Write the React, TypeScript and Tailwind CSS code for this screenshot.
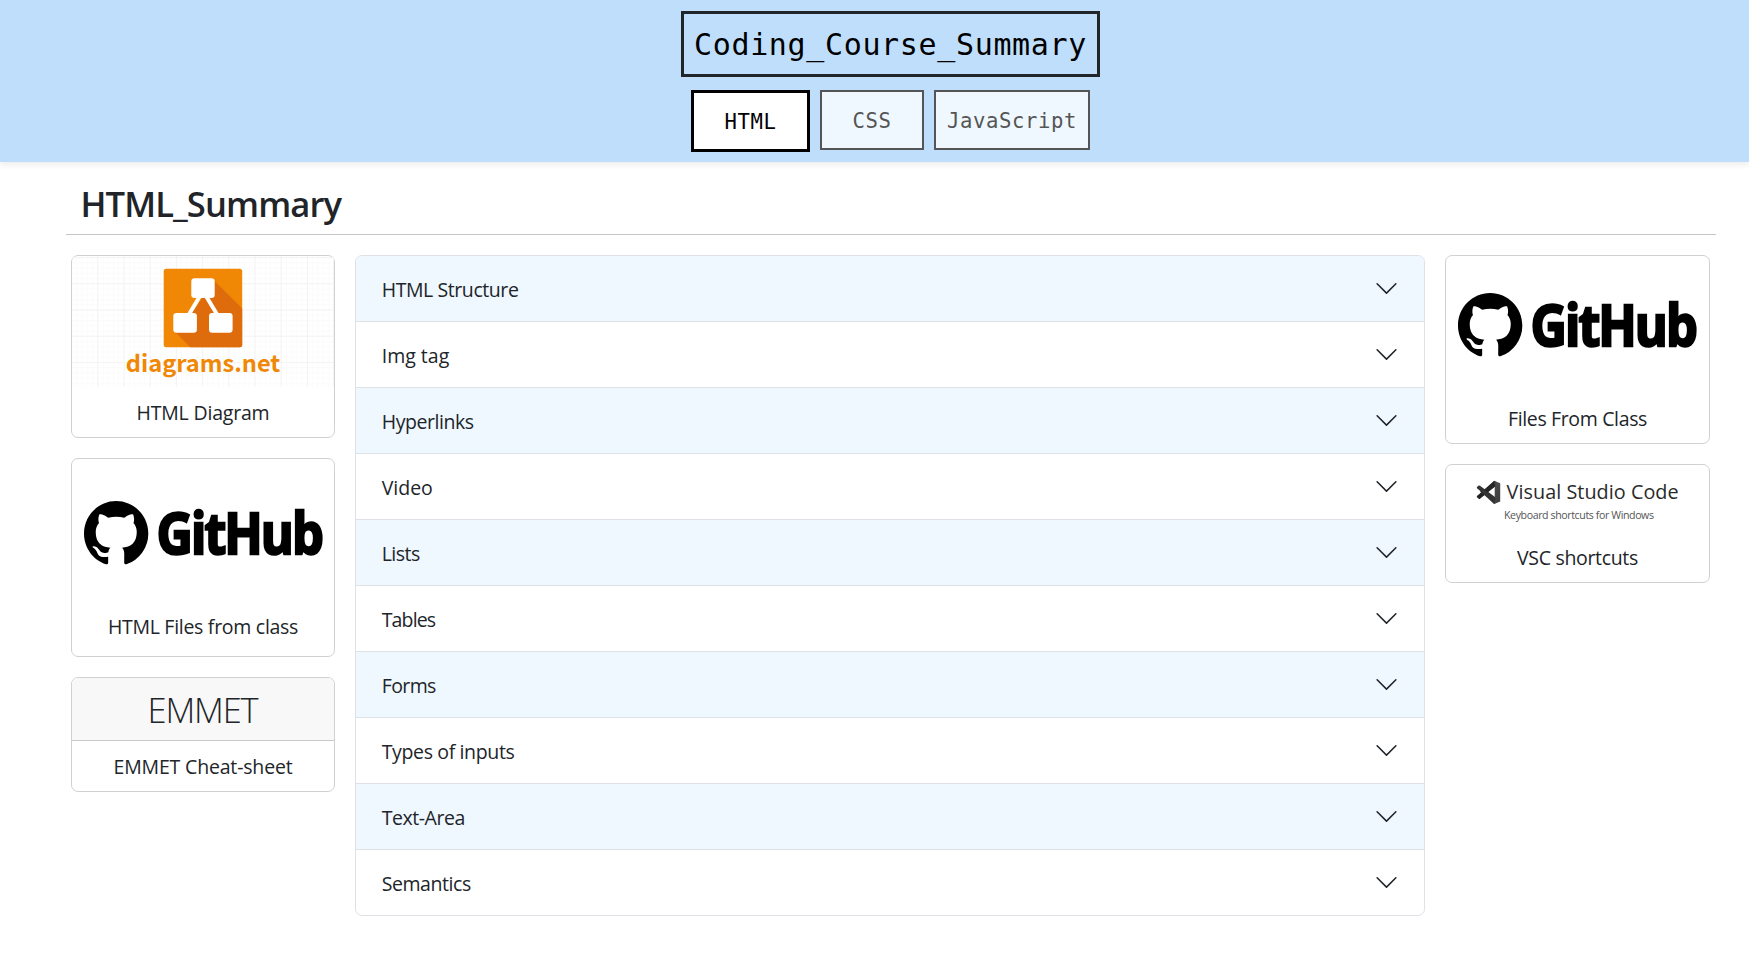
import type { ReactNode } from "react";

const FONT = "font-['Open_Sans','Noto_Sans',sans-serif]";
const MONO = "font-['DejaVu_Sans_Mono',monospace]";

const topics = [
  { label: "HTML Structure", spacing: "tracking-[-0.42px]" },
  { label: "Img tag", spacing: "tracking-[0px]" },
  { label: "Hyperlinks", spacing: "tracking-[-0.43px]" },
  { label: "Video", spacing: "tracking-[0px]" },
  { label: "Lists", spacing: "tracking-[-0.5px]" },
  { label: "Tables", spacing: "tracking-[-0.85px]" },
  { label: "Forms", spacing: "tracking-[-0.6px]" },
  { label: "Types of inputs", spacing: "tracking-[-0.36px]" },
  { label: "Text-Area", spacing: "tracking-[-0.45px]" },
  { label: "Semantics", spacing: "tracking-[-0.43px]" },
];

function Chevron() {
  return (
    <svg viewBox="0 0 16 16" className="size-[25px]" fill="#212529">
      <path
        fillRule="evenodd"
        d="M1.646 4.646a.5.5 0 0 1 .708 0L8 10.293l5.646-5.647a.5.5 0 0 1 .708.708l-6 6a.5.5 0 0 1-.708 0l-6-6a.5.5 0 0 1 0-.708z"
      />
    </svg>
  );
}

function DiagramsArt() {
  return (
    <svg width="262" height="131" viewBox="0 0 262 131" className="block">
      <defs>
        <pattern id="minor" width="5.24" height="5.24" x="-0.9" y="1.1" patternUnits="userSpaceOnUse">
          <path d="M0 .5H5.24M.5 0V5.24" stroke="#fbfbfb" />
        </pattern>
        <pattern id="major" width="26.2" height="26.2" x="-0.9" y="1.1" patternUnits="userSpaceOnUse">
          <path d="M0 .5H26.2M.5 0V26.2" stroke="#f3f3f3" />
        </pattern>
      </defs>
      <rect width="262" height="131" fill="url(#minor)" />
      <rect width="262" height="131" fill="url(#major)" />
      <rect x="91.7" y="12.7" width="78.5" height="78.6" rx="2.5" fill="#f08705" />
      <path d="M141.5 24L170.2 52.6V88.8a2.5 2.5 0 0 1-2.5 2.5H118.3L103 76L125 50z" fill="#df6c0c" />
      <path d="M128 40L114.2 63M134 40L147.8 63" stroke="#fff" strokeWidth="4" />
      <rect x="119.3" y="22.3" width="23.4" height="19.6" rx="3.2" fill="#fff" />
      <rect x="101.3" y="57" width="23.6" height="19.8" rx="3.2" fill="#fff" />
      <rect x="137" y="57" width="23.6" height="19.8" rx="3.2" fill="#fff" />
      <text
        x="53.8"
        y="116.4"
        textLength="154.5"
        fontSize="23.6"
        fontWeight="700"
        fill="#f08705"
        className="font-['Noto_Sans_CJK_SC',sans-serif]"
      >
        diagrams.net
      </text>
    </svg>
  );
}

function GitHubArt({ top }: { top: number }) {
  return (
    <svg width="262" height="130" viewBox="0 0 262 130" className="block">
      <g transform={`translate(0 ${top})`}>
        <path
          transform="translate(12 0) scale(4.02 4.06)"
          d="M8 0C3.58 0 0 3.58 0 8c0 3.54 2.29 6.53 5.47 7.59.4.07.55-.17.55-.38 0-.19-.01-.82-.01-1.49-2.01.37-2.53-.49-2.69-.94-.09-.23-.48-.94-.82-1.13-.28-.15-.68-.52-.01-.53.63-.01 1.08.58 1.23.82.72 1.21 1.87.87 2.33.66.07-.52.28-.87.51-1.07-1.78-.2-3.64-.89-3.64-3.95 0-.87.31-1.59.82-2.15-.08-.2-.36-1.02.08-2.12 0 0 .67-.21 2.2.82.64-.18 1.32-.27 2-.27s1.36.09 2 .27c1.53-1.04 2.2-.82 2.2-.82.44 1.1.16 1.92.08 2.12.51.56.82 1.27.82 2.15 0 3.07-1.87 3.75-3.65 3.95.29.25.54.73.54 1.48 0 1.07-.01 1.93-.01 2.2 0 .21.15.46.55.38A8.01 8.01 0 0 0 16 8c0-4.42-3.58-8-8-8z"
        />
        <text
          transform="translate(84.6 53) scale(.875 1)"
          fontSize="57.5"
          fontWeight="700"
          stroke="#000"
          strokeWidth="2.4"
          textLength="191"
          className="font-['Open_Sans',sans-serif]"
        >
          GitHub
        </text>
      </g>
    </svg>
  );
}

function VSCodeArt() {
  return (
    <svg width="262" height="64" viewBox="0 0 262 64" className="block">
      <defs>
        <linearGradient id="blade" x1="0" x2="1" y1="0" y2="1">
          <stop offset="0" stopColor="#555" />
          <stop offset="1" stopColor="#3c3c3c" />
        </linearGradient>
      </defs>
      <path d="M31 22.1L32.7 20.6Q33.4 20.2 34 20.7L50 32.8V38.4L31.2 23.6Q30.4 22.9 31 22.1z" fill="#333" />
      <path d="M31 32.2L32.7 33.8Q33.4 34.2 34 33.7L49.5 21V16L31.2 30.8Q30.4 31.5 31 32.2z" fill="#222" />
      <path
        fillRule="evenodd"
        d="M48.2 15.7L54.2 18.2V36.4L48.2 39L43.5 34.2L48.7 33.3V21.4L42.5 26.2L40.5 24z"
        fill="url(#blade)"
      />
      <path d="M48.2 15.7L49.4 21.1L37 31.1L33.8 28.6z" fill="#252525" />
      <path d="M48.2 39L49.4 33.6L37 23.6L33.8 26.1z" fill="#333" />
      <text x="60.6" y="34.2" fontSize="19.8" textLength="172" fill="#2a2a2a" className="font-['Open_Sans',sans-serif]">
        Visual Studio Code
      </text>
      <text x="58" y="54.3" fontSize="10.6" textLength="150" fill="#555" className="font-['Open_Sans',sans-serif]">
        Keyboard shortcuts for Windows
      </text>
    </svg>
  );
}

function Card({ size, art, caption, spacing }: { size: string; art: ReactNode; caption: string; spacing: string }) {
  return (
    <a className={`flex flex-col justify-between rounded-[7px] border border-[#d0d1d2] bg-white ${size}`}>
      {art}
      <span className={`text-center text-[19.5px] leading-[30px] ${spacing}`}>{caption}</span>
    </a>
  );
}

export default function App() {
  return (
    <div className={`min-h-[966px] bg-white text-[#212529] ${FONT}`}>
      <header className={`flex h-[162px] flex-col items-center bg-[#bfdefb] pt-[11px] pl-[32px] shadow-[0_3px_6px_rgba(0,0,0,0.075)] ${MONO}`}>
        <h1 className="h-[66px] w-[419px] border-[3px] border-[#212529] pl-[10px] text-[30px] leading-[61px] tracking-[0.65px] whitespace-nowrap text-black">
          Coding_Course_Summary
        </h1>
        <nav className="mt-[13px] flex items-start gap-[10px] text-center text-[20.6px] tracking-[0.6px]">
          <a className="h-[62px] w-[119px] border-[3px] border-black bg-white pt-[1px] leading-[57px] text-black">HTML</a>
          <a className="h-[60px] w-[104px] border-2 border-[#555] bg-[#f0f8ff] pt-[1px] leading-[56px] text-[#555]">CSS</a>
          <a className="h-[60px] w-[156px] border-2 border-[#555] bg-[#f0f8ff] pt-[1px] leading-[56px] text-[#555]">JavaScript</a>
        </nav>
      </header>

      <main className="ml-[66px] w-[1650px]">
        <h2 className="h-[73px] border-b border-[#c4c5c6] pt-[18px] pl-[14.5px] text-[34.6px] leading-[48px] font-semibold tracking-[-0.9px]">
          HTML_Summary
        </h2>

        <div className="mt-[20px] flex items-start gap-[20px] px-[5px]">
          <aside className="flex w-[264px] flex-col gap-[20px]">
            <Card size="h-[183px] pb-[9px]" art={<DiagramsArt />} caption="HTML Diagram" spacing="tracking-[-0.19px]" />
            <Card size="h-[199px] pb-[14px]" art={<GitHubArt top={42} />} caption="HTML Files from class" spacing="tracking-[-0.285px]" />
            <a className="flex h-[115px] flex-col rounded-[7px] border border-[#d0d1d2] bg-white text-center">
              <span className="h-[63px] rounded-t-[6px] border-b border-[#c8c9ca] bg-[#f8f8f8] pr-[1px] text-[34.5px] leading-[64px] font-light tracking-[-1.2px]">
                EMMET
              </span>
              <span className="pt-[11px] text-[19.5px] leading-[30px] tracking-[-0.17px]">EMMET Cheat-sheet</span>
            </a>
          </aside>

          <ul className="w-[1070px] overflow-hidden rounded-[7px] border border-[#dee2e6]">
            {topics.map((t) => (
              <li
                key={t.label}
                className="flex h-[66px] items-center justify-between border-b border-[#dee2e6] pr-[25px] pl-[25.7px] odd:bg-[#eff7ff] last:h-[65px] last:border-b-0"
              >
                <span className={`pt-[3px] text-[19.5px] leading-[30px] ${t.spacing}`}>{t.label}</span>
                <Chevron />
              </li>
            ))}
          </ul>

          <aside className="flex w-[265px] flex-col gap-[20px]">
            <Card size="h-[189px] pb-[9px]" art={<GitHubArt top={37} />} caption="Files From Class" spacing="tracking-[-0.35px]" />
            <Card size="h-[119px] pb-[9px]" art={<VSCodeArt />} caption="VSC shortcuts" spacing="tracking-[-0.33px]" />
          </aside>
        </div>
      </main>
    </div>
  );
}
